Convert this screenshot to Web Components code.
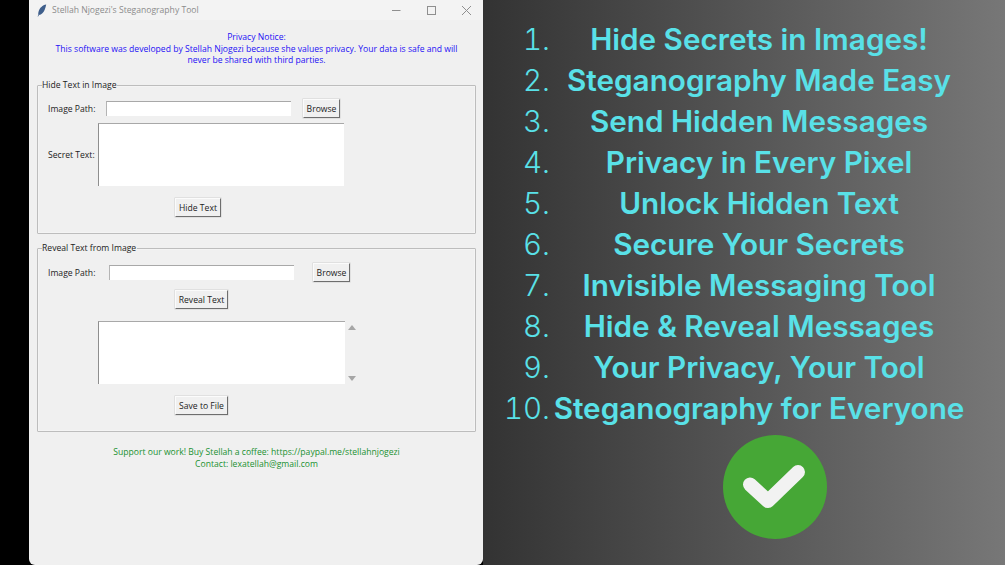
<!DOCTYPE html>
<html lang="en"><head><meta charset="utf-8"><title>Steganography Tool</title>
<style>
html,body{margin:0;padding:0;width:1005px;height:565px;overflow:hidden}
body{display:flex;background:#000}
</style></head>
<body>
<promo-stage>
  <tk-window slot="window" title="Stellah Njogezi's Steganography Tool">
    <tk-note color="#2410f5" top="12" bottom="18.5">Privacy Notice:<br>This software was developed by Stellah Njogezi because she values privacy. Your data is safe and will<br>never be shared with third parties.</tk-note>
    <tk-group label="Hide Text in Image" h="149">
      <tk-row top="13" left="10">
        <tk-label w="58">Image Path:</tk-label><tk-entry w="185" h="15"></tk-entry><tk-gap w="12"></tk-gap><tk-button w="37">Browse</tk-button>
      </tk-row>
      <tk-row top="5" left="10">
        <tk-label w="50">Secret Text:</tk-label><tk-text w="246" h="63"></tk-text>
      </tk-row>
      <tk-row top="12" left="137"><tk-button w="46">Hide Text</tk-button></tk-row>
    </tk-group>
    <tk-gap h="14"></tk-gap>
    <tk-group label="Reveal Text from Image" h="184">
      <tk-row top="14" left="10">
        <tk-label w="61">Image Path:</tk-label><tk-entry w="185" h="15"></tk-entry><tk-gap w="19"></tk-gap><tk-button w="37">Browse</tk-button>
      </tk-row>
      <tk-row top="8" left="137"><tk-button w="53">Reveal Text</tk-button></tk-row>
      <tk-row top="12" left="60"><tk-text w="247" h="63"></tk-text><tk-scroll></tk-scroll></tk-row>
      <tk-row top="12" left="137"><tk-button w="53">Save to File</tk-button></tk-row>
    </tk-group>
    <tk-note color="#1a9030" top="15" bottom="0">Support our work! Buy Stellah a coffee: https://paypal.me/stellahnjogezi<br>Contact: lexatellah@gmail.com</tk-note>
  </tk-window>
  <feature-panel slot="panel">
    <feature-item n="1.">Hide Secrets in Images!</feature-item>
    <feature-item n="2.">Steganography Made Easy</feature-item>
    <feature-item n="3.">Send Hidden Messages</feature-item>
    <feature-item n="4.">Privacy in Every Pixel</feature-item>
    <feature-item n="5.">Unlock Hidden Text</feature-item>
    <feature-item n="6.">Secure Your Secrets</feature-item>
    <feature-item n="7.">Invisible Messaging Tool</feature-item>
    <feature-item n="8.">Hide &amp; Reveal Messages</feature-item>
    <feature-item n="9.">Your Privacy, Your Tool</feature-item>
    <feature-item n="10.">Steganography for Everyone</feature-item>
    <check-badge></check-badge>
  </feature-panel>
</promo-stage>
<script>
function def(name, css, html, init){
  customElements.define(name, class extends HTMLElement{
    connectedCallback(){
      if(this.shadowRoot) return;
      const r=this.attachShadow({mode:'open'});
      r.innerHTML='<style>'+css+'</style>'+(typeof html==='function'?html(this):html);
      if(init) init(this,r);
    }
  });
}
const FONT='"Open Sans","Noto Sans",sans-serif';
def('promo-stage',`:host{display:flex;width:1005px;height:565px;background:#000;padding-left:29px;box-sizing:border-box}`,
 `<slot name="window"></slot><slot name="panel"></slot>`);
def('tk-window',`:host{display:flex;flex-direction:column;width:454px;height:565px;background:#f0f0f0;border-radius:6px 0 6px 6px;flex:none;font:8.6px/11.5px ${FONT};color:#222;box-sizing:border-box}
.bar{display:flex;align-items:center;height:20px;background:#f3f3f3;flex:none;padding-left:8px}
.title{margin-left:5px;color:#8c8c8c;flex:1;white-space:nowrap;padding-top:1px}
.ctl{display:block;flex:none}
.body{display:flex;flex-direction:column;padding:0 7px 0 8px}`,
 h=>`<div class="bar">
  <svg class="ctl" width="10" height="13" viewBox="0 0 10 13"><path d="M9.2.6C5.6 1.2 2.6 4 1.6 7.6c-.4 1.4-.4 2.4-.2 3L.6 12.4l.5.2.9-1.7c2.6-.3 4.6-2.2 5.6-4.900C8.3 4.200 8.900 2.300 9.200.6z" fill="#3f5f8c"/></svg>
  <span class="title">${h.getAttribute('title')}</span>
  <svg class="ctl" width="80" height="12" viewBox="0 0 80 12" style="margin-right:11px" fill="none" stroke="#8f8f8f" stroke-width="1"><path d="M0 6.500H8.500"/><rect x="35.500" y="2.500" width="8" height="8"/><path d="M70 2l9 9M79 2l-9 9"/></svg>
 </div><div class="body"><slot></slot></div>`);
def('tk-note',`:host{display:block;text-align:center;white-space:nowrap}`,
 `<slot></slot>`,(h)=>{h.style.color=h.getAttribute('color');h.style.marginTop=h.getAttribute('top')+'px';h.style.marginBottom=h.getAttribute('bottom')+'px';});
def('tk-group',`:host{display:block;box-sizing:border-box;position:relative;border:1px solid #bdbdbd;border-radius:1px;box-shadow:inset 0 0 0 .5px #f8f8f8}
.lab{position:absolute;left:4px;top:-6px;background:#f0f0f0;padding:0 1px 0 0;color:#222;line-height:11px;white-space:nowrap}`,
 h=>`<span class="lab">${h.getAttribute('label')}</span><slot></slot>`,
 h=>{h.style.height=h.getAttribute('h')+'px';});
def('tk-row',`:host{display:flex;align-items:center}`,`<slot></slot>`,
 h=>{h.style.marginTop=h.getAttribute('top')+'px';h.style.marginLeft=h.getAttribute('left')+'px';});
def('tk-gap',`:host{display:block;flex:none}`,``,
 h=>{if(h.getAttribute('w'))h.style.width=h.getAttribute('w')+'px';if(h.getAttribute('h'))h.style.height=h.getAttribute('h')+'px';});
def('tk-label',`:host{display:block;flex:none;white-space:nowrap;color:#222;padding-top:2px;box-sizing:border-box}`,`<slot></slot>`,h=>{h.style.width=h.getAttribute('w')+'px';});
def('tk-entry',`:host{display:block;flex:none;box-sizing:border-box;background:#fff;border-top:1px solid #a8a8a8;border-left:1px solid #b4b4b4}`,``,
 h=>{h.style.width=h.getAttribute('w')+'px';h.style.height=h.getAttribute('h')+'px';});
def('tk-text',`:host{display:block;flex:none;box-sizing:border-box;background:#fff;border-top:1px solid #a8a8a8;border-left:1px solid #8e8e8e}`,``,
 h=>{h.style.width=h.getAttribute('w')+'px';h.style.height=h.getAttribute('h')+'px';});
def('tk-button',`:host{display:flex;flex:none;align-items:center;justify-content:center;box-sizing:border-box;height:19px;padding-top:2px;background:#f0f0f0;color:#222;white-space:nowrap;border:1px solid;border-color:#fbfbfb #6e6e6e #6e6e6e #fbfbfb;box-shadow:0 0 0 .5px #d0d0d0}`,`<slot></slot>`,
 h=>{h.style.width=h.getAttribute('w')+'px';});
def('tk-scroll',`:host{display:flex;flex:none;flex-direction:column;justify-content:space-between;align-items:center;width:14px;height:63px;padding:4px 0 3px;box-sizing:border-box}
svg{display:block}`,`<svg width="8" height="5" viewBox="0 0 8 5"><path d="M4 0l4 5H0z" fill="#a6a6a6"/></svg><svg width="8" height="5" viewBox="0 0 8 5"><path d="M0 0h8L4 5z" fill="#a6a6a6"/></svg>`);
def('feature-panel',`:host{display:flex;flex-direction:column;flex:none;width:522px;height:565px;box-sizing:border-box;padding-top:19px;background:linear-gradient(90deg,#333 0%,#777 100%)}`,`<slot></slot>`);
def('feature-item',`:host{display:grid;grid-template-columns:67px 412px;column-gap:3px;height:41px;align-items:center;color:#59e1e8;font-family:Inter,"Noto Sans",sans-serif;font-size:29.7px;line-height:41px;white-space:nowrap}
.n{text-align:right;font-weight:300;font-size:29.5px;font-variant-numeric:tabular-nums;margin-right:0}
.t{text-align:center;font-weight:600}`,
 h=>`<span class="n">${h.getAttribute('n')}</span><span class="t"><slot></slot></span>`);
def('check-badge',`:host{display:block;align-self:flex-start;margin:6px 0 0 240px;width:104px;height:104px}svg{display:block}`,
 `<svg width="104" height="104" viewBox="0 0 104 104"><circle cx="52" cy="52" r="52" fill="#46a736"/><path d="M27 49.500L45 66 75 37" fill="none" stroke="#f2f2f2" stroke-width="14" stroke-linecap="round" stroke-linejoin="round"/></svg>`);
</script>
</body></html>
